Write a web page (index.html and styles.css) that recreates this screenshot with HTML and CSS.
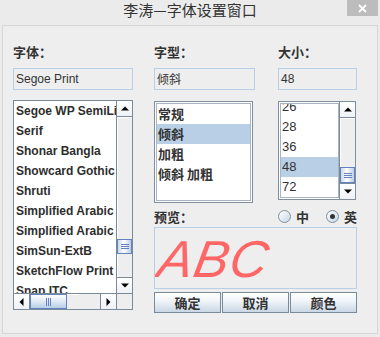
FILE: index.html
```html
<!DOCTYPE html>
<html>
<head>
<meta charset="utf-8">
<link rel="stylesheet" href="styles.css">
</head>
<body>
<div class="titlebar">
  <div class="title">李涛—字体设置窗口</div>
  <div class="close"><svg width="9" height="9" viewBox="0 0 9 9"><path d="M1 1 L8 8 M8 1 L1 8" stroke="#fff" stroke-width="1.8" fill="none"/></svg></div>
</div>
<div class="window">
  <div class="heads">
    <div class="lbl">字体：</div>
    <div class="lbl">字型：</div>
    <div class="lbl">大小：</div>
    <div class="field f1">Segoe Print</div>
    <div class="field f2">倾斜</div>
    <div class="field f3">48</div>
  </div>
  <div class="main">
    <div class="fontlist">
      <div class="fview">
        <div class="frow">Segoe WP SemiLight</div>
        <div class="frow">Serif</div>
        <div class="frow">Shonar Bangla</div>
        <div class="frow">Showcard Gothic</div>
        <div class="frow">Shruti</div>
        <div class="frow">Simplified Arabic</div>
        <div class="frow">Simplified Arabic Fixed</div>
        <div class="frow">SimSun-ExtB</div>
        <div class="frow">SketchFlow Print</div>
        <div class="frow">Snap ITC</div>
      </div>
      <div class="vscroll">
        <div class="sbtn up"><svg width="8" height="5" viewBox="0 0 8 5"><path d="M0 4.5 L4 0.5 L8 4.5Z" fill="#000"/></svg></div>
        <div class="track"><div class="vthumb font-thumb"><svg width="8" height="5" viewBox="0 0 8 5"><path d="M0 0.5H8M0 2.5H8M0 4.5H8" stroke="#6382bf" stroke-width="1"/></svg></div></div>
        <div class="sbtn down"><svg width="8" height="5" viewBox="0 0 8 5"><path d="M0 0.5 L8 0.5 L4 4.5Z" fill="#000"/></svg></div>
      </div>
      <div class="hscroll">
        <div class="sbtn left"><svg width="5" height="8" viewBox="0 0 5 8"><path d="M4.5 0 L0.5 4 L4.5 8Z" fill="#000"/></svg></div>
        <div class="htrack"><div class="hthumb"><svg width="5" height="8" viewBox="0 0 5 8"><path d="M0.5 0V8M2.5 0V8M4.5 0V8" stroke="#6382bf" stroke-width="1"/></svg></div></div>
        <div class="sbtn right"><svg width="5" height="8" viewBox="0 0 5 8"><path d="M0.5 0 L4.5 4 L0.5 8Z" fill="#000"/></svg></div>
      </div>
      <div class="corner"></div>
    </div>
    <div class="right">
      <div class="lists">
        <div class="stylelist">
          <div class="sview">
            <div class="crow">常规</div>
            <div class="crow sel">倾斜</div>
            <div class="crow">加粗</div>
            <div class="crow">倾斜 加粗</div>
          </div>
        </div>
        <div class="sizelist">
          <div class="sview">
            <div class="nrows">
              <div class="nrow">26</div>
              <div class="nrow">28</div>
              <div class="nrow">36</div>
              <div class="nrow sel">48</div>
              <div class="nrow">72</div>
            </div>
          </div>
          <div class="vscroll">
            <div class="sbtn up"><svg width="8" height="5" viewBox="0 0 8 5"><path d="M0 4.5 L4 0.5 L8 4.5Z" fill="#000"/></svg></div>
            <div class="track"><div class="vthumb size-thumb"><svg width="8" height="5" viewBox="0 0 8 5"><path d="M0 0.5H8M0 2.5H8M0 4.5H8" stroke="#6382bf" stroke-width="1"/></svg></div></div>
            <div class="sbtn down"><svg width="8" height="5" viewBox="0 0 8 5"><path d="M0 0.5 L8 0.5 L4 4.5Z" fill="#000"/></svg></div>
          </div>
        </div>
      </div>
      <div class="prevhead">
        <div class="lbl">预览：</div>
        <div class="radios">
          <div class="radio"><span class="dot"></span><span class="rtext">中</span></div>
          <div class="radio"><span class="dot on"></span><span class="rtext">英</span></div>
        </div>
      </div>
      <div class="preview"><span class="sample">ABC</span></div>
      <div class="buttons">
        <div class="button">确定</div>
        <div class="button">取消</div>
        <div class="button">颜色</div>
      </div>
    </div>
  </div>
</div>
</body>
</html>
```

FILE: styles.css
```css
* { box-sizing: border-box; }
html, body { margin: 0; padding: 0; }
body {
  width: 380px;
  height: 337px;
  overflow: hidden;
  background: #ebebeb;
  color: #333;
  font-family: "Liberation Sans", "Noto Sans CJK SC", sans-serif;
}
.titlebar {
  height: 25px;
  display: flex;
  align-items: flex-start;
}
.title {
  flex: 1;
  padding-left: 33px;
  text-align: center;
  font-family: "Noto Sans CJK SC", sans-serif;
  font-size: 15px;
  line-height: 20px;
  color: #333;
}
.close {
  width: 31px;
  height: 16px;
  margin-right: 2px;
  background: #bcbcbc;
  display: flex;
  align-items: center;
  justify-content: center;
}
.window {
  margin: 0 2px;
  height: 309px;
  border: 1px solid #d6d6d6;
  background: #eeeeee;
  padding: 18px 0 0 10px;
}
.heads {
  display: grid;
  grid-template-columns: 141px 124px 79px;
  row-gap: 8px;
}
.lbl {
  font-family: "Noto Sans CJK SC", sans-serif;
  font-size: 13px;
  font-weight: bold;
  line-height: 16px;
  height: 16px;
  color: #333;
}
.field {
  height: 22px;
  border: 1px solid #b8cfe5;
  background: #eeeeee;
  font-size: 12px;
  line-height: 20px;
  padding-left: 2px;
  color: #333;
  white-space: nowrap;
}
.f1 { width: 120px; }
.f2 { width: 101px; font-family: "Noto Sans CJK SC", sans-serif; }
.f3 { width: 79px; }
.main {
  display: flex;
  align-items: flex-start;
  margin-top: 10px;
}
.fontlist {
  width: 120px;
  height: 210px;
  border: 1px solid #7a8a99;
  background: #fff;
  display: grid;
  grid-template-columns: 102px 16px;
  grid-template-rows: 192px 16px;
}
.fview {
  overflow: hidden;
}
.frow {
  height: 20px;
  line-height: 20px;
  padding-left: 2px;
  font-size: 12px;
  font-weight: bold;
  white-space: nowrap;
  color: #2e2e2e;
}
.vscroll {
  display: flex;
  flex-direction: column;
  border-left: 1px solid #7a8a99;
  background: #eeeeee;
}
.sbtn {
  flex: none;
  display: flex;
  align-items: center;
  justify-content: center;
  background: linear-gradient(#ffffff, #eef2f6);
}
.vscroll .sbtn { height: 16px; }
.sbtn.up { border-bottom: 1px solid #7a8a99; }
.sbtn.down { border-top: 1px solid #7a8a99; }
.track {
  flex: 1;
  box-shadow: inset 1px 1px 0 #ffffff;
}
.vthumb {
  border: 1px solid #6382bf;
  background: linear-gradient(90deg, #c9d9ea, #ffffff 45%, #b8cfe5);
  display: flex;
  align-items: center;
  justify-content: center;
}
.font-thumb { margin-top: 122px; height: 15px; }
.size-thumb { margin-top: 49px; height: 16px; }
.hscroll {
  display: flex;
  border-top: 1px solid #7a8a99;
  background: #eeeeee;
}
.hscroll .sbtn { width: 16px; }
.sbtn.left { border-right: 1px solid #7a8a99; }
.sbtn.right { border-left: 1px solid #7a8a99; }
.htrack {
  flex: 1;
  box-shadow: inset 1px 1px 0 #ffffff;
}
.hthumb {
  width: 37px;
  height: 100%;
  border: 1px solid #6382bf;
  background: linear-gradient(#ffffff, #dde8f3 50%, #b8cfe5);
  display: flex;
  align-items: center;
  justify-content: center;
}
.corner {
  border-top: 1px solid #7a8a99;
  border-left: 1px solid #7a8a99;
  background: #eeeeee;
}
.right {
  margin-left: 21px;
  width: 203px;
}
.lists {
  display: flex;
  align-items: flex-start;
  margin-top: 1px;
}
.stylelist {
  width: 99px;
  height: 102px;
  border: 1px solid #7f8f9f;
  background: #fff;
  padding: 1px;
}
.stylelist .sview {
  height: 100%;
  border: 1px solid #a9b6c2;
  overflow: hidden;
}
.crow {
  height: 20px;
  line-height: 20px;
  padding-left: 1px;
  font-family: "Noto Sans CJK SC", sans-serif;
  font-size: 13px;
  font-weight: bold;
  white-space: nowrap;
  color: #333;
}
.sel { background: #b8cfe5; }
.sizelist {
  margin-left: 25px;
  width: 78px;
  height: 99px;
  border: 1px solid #7f8f9f;
  background: #fff;
  display: flex;
}
.sizelist .sview {
  flex: 1;
  margin: 1px 0 1px 1px;
  border: 1px solid #a9b6c2;
  overflow: hidden;
}
.nrows { margin-top: -7px; }
.nrow {
  height: 20px;
  line-height: 20px;
  padding-left: 1px;
  font-size: 13px;
  color: #333;
}
.sizelist .vscroll { width: 16px; }
.prevhead {
  margin-top: 4px;
  height: 19px;
  display: flex;
  align-items: center;
  justify-content: space-between;
}
.radios {
  display: flex;
  gap: 17px;
}
.radio {
  display: flex;
  align-items: center;
  gap: 5px;
}
.dot {
  width: 13px;
  height: 13px;
  border-radius: 50%;
  border: 1px solid #7f8f9f;
  background: linear-gradient(135deg, #ffffff, #c7d7e8);
  display: flex;
  align-items: center;
  justify-content: center;
}
.dot.on::after {
  content: "";
  width: 5px;
  height: 5px;
  border-radius: 50%;
  background: #333;
}
.rtext {
  font-family: "Noto Sans CJK SC", sans-serif;
  font-size: 13px;
  font-weight: bold;
  line-height: 16px;
  color: #333;
}
.preview {
  margin-top: 1px;
  height: 62px;
  border: 1px solid #b8cfe5;
  padding-left: 4px;
  font-family: "Liberation Sans", sans-serif;
  font-style: italic;
  font-size: 52px;
  line-height: 62px;
  color: #ff6666;
  white-space: nowrap;
  overflow: hidden;
}
.sample {
  display: inline-block;
  transform: skewX(-10deg);
  letter-spacing: 1px;
}
.buttons {
  margin-top: 3px;
  display: flex;
  gap: 1px;
}
.button {
  width: 67px;
  height: 21px;
  border: 1px solid #7a8a99;
  background: linear-gradient(#ffffff, #f1f5f9 40%, #c9d7e5);
  text-align: center;
  font-family: "Noto Sans CJK SC", sans-serif;
  font-size: 13px;
  font-weight: bold;
  line-height: 19px;
  color: #333;
}
```
